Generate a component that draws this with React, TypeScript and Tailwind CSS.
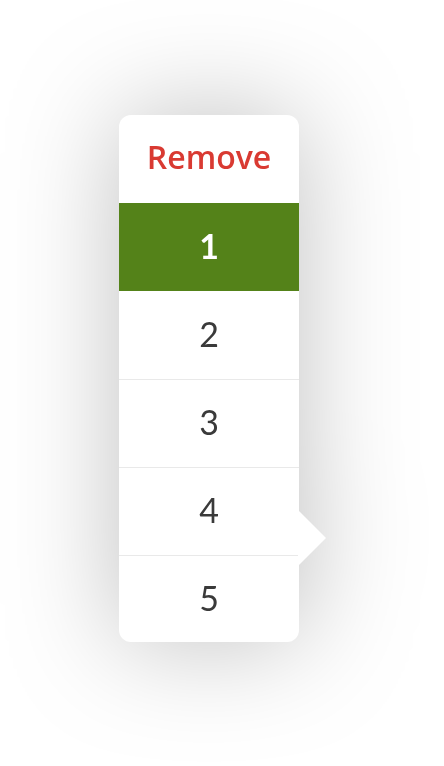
export default function App() {
  const items = ["1", "2", "3", "4", "5"]
  const selected = "1"

  return (
    <div className="flex h-[766px] w-full justify-center bg-white pt-[115px] pr-[26px]" style={{ fontFamily: 'Lato, "Liberation Sans", sans-serif' }}>
      <div className="relative h-[527px] w-[180px] drop-shadow-[0_0_55px_rgba(0,0,0,0.25)]">
        <div className="flex h-full flex-col overflow-hidden rounded-xl bg-white">
          <button className="flex h-[88px] shrink-0 items-center justify-center pb-[4px] font-['Open_Sans',sans-serif] text-[32px] font-semibold text-[#d93a32]">
            Remove
          </button>
          {items.map((n, i) => (
            <div
              key={n}
              className={
                n === selected
                  ? "flex h-[88px] shrink-0 items-center justify-center bg-[#548219] pb-[4px] text-[34px] font-bold text-white"
                  : i > 1
                    ? "flex h-[88px] shrink-0 items-center justify-center border-t border-[#e9e9e9] pb-[5px] text-[34px] text-[#3a3a3a]"
                    : "flex h-[88px] shrink-0 items-center justify-center pb-[4px] text-[34px] text-[#3a3a3a]"
              }
            >
              {n}
            </div>
          ))}
        </div>
        <svg className="absolute top-[395px] -right-[28px]" width="29" height="56" viewBox="0 0 29 56">
          <polygon points="0,0 28,28 0,56" fill="#ffffff" />
        </svg>
      </div>
    </div>
  )
}
